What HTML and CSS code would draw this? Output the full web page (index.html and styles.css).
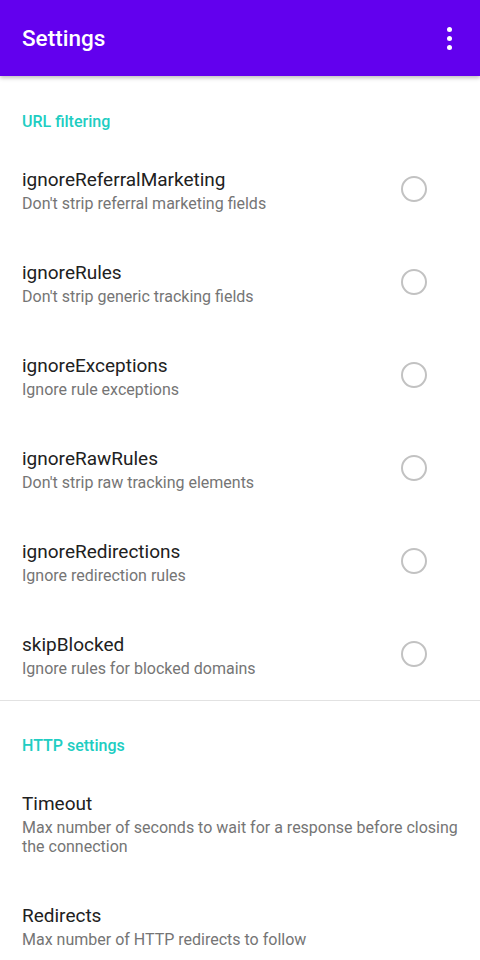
FILE: index.html
```html
<!DOCTYPE html>
<html>
<head>
<meta charset="utf-8">
<link rel="stylesheet" href="styles.css">
</head>
<body>
<header class="appbar">
  <h1 class="appbar-title">Settings</h1>
  <div class="overflow"><span></span><span></span><span></span></div>
</header>
<main class="content">
  <section class="category">
    <div class="category-title">URL filtering</div>
    <div class="pref">
      <div class="pref-text"><div class="pref-title">ignoreReferralMarketing</div><div class="pref-summary">Don't strip referral marketing fields</div></div>
      <div class="pref-widget"><span class="radio"></span></div>
    </div>
    <div class="pref">
      <div class="pref-text"><div class="pref-title">ignoreRules</div><div class="pref-summary">Don't strip generic tracking fields</div></div>
      <div class="pref-widget"><span class="radio"></span></div>
    </div>
    <div class="pref">
      <div class="pref-text"><div class="pref-title">ignoreExceptions</div><div class="pref-summary">Ignore rule exceptions</div></div>
      <div class="pref-widget"><span class="radio"></span></div>
    </div>
    <div class="pref">
      <div class="pref-text"><div class="pref-title">ignoreRawRules</div><div class="pref-summary">Don't strip raw tracking elements</div></div>
      <div class="pref-widget"><span class="radio"></span></div>
    </div>
    <div class="pref">
      <div class="pref-text"><div class="pref-title">ignoreRedirections</div><div class="pref-summary">Ignore redirection rules</div></div>
      <div class="pref-widget"><span class="radio"></span></div>
    </div>
    <div class="pref">
      <div class="pref-text"><div class="pref-title">skipBlocked</div><div class="pref-summary">Ignore rules for blocked domains</div></div>
      <div class="pref-widget"><span class="radio"></span></div>
    </div>
  </section>
  <section class="category category-divided">
    <div class="category-title second">HTTP settings</div>
    <div class="pref">
      <div class="pref-text"><div class="pref-title">Timeout</div><div class="pref-summary">Max number of seconds to wait for a response before closing the connection</div></div>
    </div>
    <div class="pref">
      <div class="pref-text"><div class="pref-title">Redirects</div><div class="pref-summary">Max number of HTTP redirects to follow</div></div>
    </div>
  </section>
</main>
</body>
</html>
```
FILE: styles.css
```css
* { box-sizing: border-box; }
html, body { margin: 0; padding: 0; }
body {
  width: 480px;
  height: 960px;
  overflow: hidden;
  background: #ffffff;
  font-family: Roboto, "Noto Sans", sans-serif;
}
.appbar {
  height: 76px;
  background: #6200ee;
  display: flex;
  align-items: center;
  justify-content: space-between;
  padding: 0 22px;
  box-shadow: 0 2px 4px rgba(0,0,0,0.25);
  position: relative;
  z-index: 1;
}
.appbar-title {
  margin: 0;
  color: #ffffff;
  font-size: 22.5px;
  font-weight: 500;
}
.overflow {
  display: flex;
  flex-direction: column;
  gap: 4px;
  margin-right: 6px;
}
.overflow span {
  width: 5px;
  height: 5px;
  border-radius: 50%;
  background: #ffffff;
}
.category-divided { border-top: 1px solid #e2e2e2; }
.category-title {
  color: #20cdc2;
  font-size: 16px;
  font-weight: 500;
  line-height: 20px;
  padding: 36px 22px 10px;
}
.category-title.second { padding-top: 35px; }
.pref {
  display: flex;
  align-items: center;
  padding: 26px 0 22px 22px;
}
.pref-text { flex: 1; min-width: 0; padding-right: 20px; }
.pref-title {
  color: #212121;
  font-size: 19px;
  line-height: 24px;
}
.pref-summary {
  color: #757575;
  font-size: 16px;
  line-height: 19px;
  margin-top: 2px;
}
.pref-widget {
  width: 130px;
  display: flex;
  justify-content: center;
  padding-right: 2px;
}
.radio {
  width: 26px;
  height: 26px;
  margin-bottom: 4px;
  border: 2px solid #c2c2c2;
  border-radius: 50%;
}
```
